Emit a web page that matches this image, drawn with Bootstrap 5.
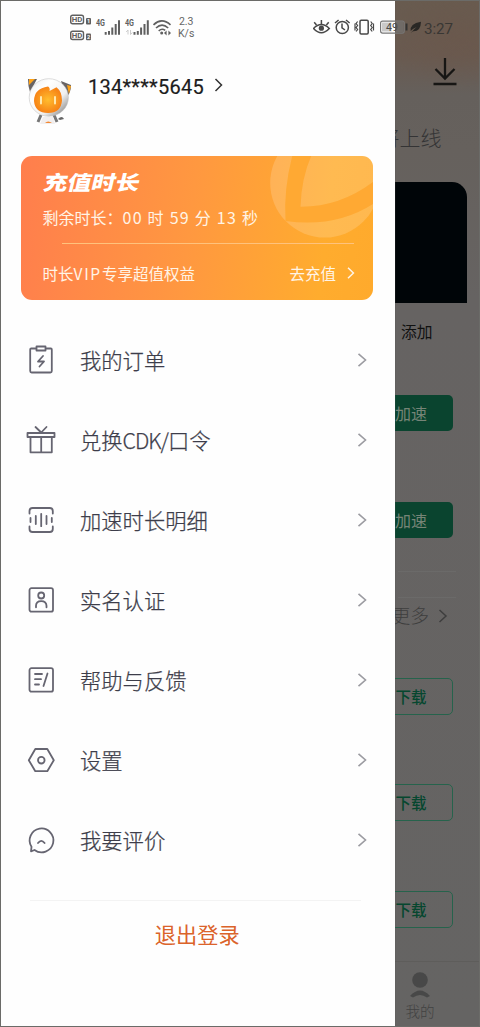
<!DOCTYPE html>
<html lang="zh-CN">
<head>
<meta charset="utf-8">
<meta name="viewport" content="width=device-width, initial-scale=1">
<title>我的</title>
<link href="https://cdn.jsdelivr.net/npm/bootstrap@5.3.0/dist/css/bootstrap.min.css" rel="stylesheet">
<style>
  body { font-family: "Noto Sans CJK SC", sans-serif; background: #fff; font-weight: 300; }
  .screen { width: 480px; height: 1027px; display: grid; grid-template-columns: 394.5px 1fr; }
  .screen::after { content: ""; position: absolute; inset: 0; border: 1px solid #6b6b68; pointer-events: none; z-index: 5; }
  svg { display: block; flex: none; }
  .statusbar { height: 54px; padding-left: 70px; z-index: 3; font: 400 10.5px/12px Roboto, sans-serif; color: #666; }
  .speed { margin-left: 6px; padding-top: 2px; }
  .clock { font-size: 15.2px; color: #393734; letter-spacing: -.1px; padding-top: 3px; margin: 0 27px 0 1px; }
  .drawer { background: #fefefe; box-shadow: 0 0 1px #555; z-index: 2; }
  .account { height: 102px; margin-top: 54px; padding: 22px 0 0 26px; }
  .phone { font: 400 20px/24px Roboto, sans-serif; color: #1c1c1c; letter-spacing: .25px; margin: -1px 0 0 15px; width: 117px; -webkit-text-stroke: .2px #1c1c1c; }
  .vip { margin-left: 21px; width: 352px; height: 144px; border-radius: 11px; background: linear-gradient(97deg, #ff7e4d 0%, #ff9840 48%, #ffac2e 85%, #ffaa2c 100%); color: #fff4e6; padding: 13px 18px 0 21.5px; font-weight: 400; }
  .swirl { right: 0; top: 0; }
  .vip-title { font-size: 20px; line-height: 26px; font-weight: 900; color: #fff; transform: translateX(-2px) scaleX(1.2) skewX(-11deg); transform-origin: 0 100%; width: 80px; white-space: nowrap; }
  .remain { font-size: 16px; line-height: 24px; margin-top: 10px; white-space: nowrap; }
  .remain span { letter-spacing: 1.25px; }
  .rule { height: 1px; background: #ffc27c; margin: 14px 1px 0 19px; }
  .vip-foot { font-size: 15.5px; line-height: 24px; margin-top: 17px; }
  .vip-word { letter-spacing: 1.7px; }
  .menu { margin-top: 20px; }
  .menu-row { height: 80px; padding: 0 28px 0 26px; font-size: 21.3px; color: #3d3d4a; text-decoration: none; }
  .menu-label { margin-left: 24px; -webkit-text-stroke: .25px #3d3d4a; }
  .menu-row .ico { stroke: #666571; stroke-width: 1.8; fill: none; stroke-linecap: round; stroke-linejoin: round; }
  .cdk { letter-spacing: -1px; }
  .arrow { fill: none; stroke: #9b9ba1; stroke-width: 1.6; }
  .leave { margin: 20px 34px 0 30px; padding-left: 4px; border-top: 1px solid #f3f3f3; color: #db632a; font-size: 21.2px; line-height: 66px; font-weight: 400; }
  .behind { background: radial-gradient(ellipse 70px 50px at 62px 38px, #6b564a80, #6b564a00), linear-gradient(180deg, #685b4f 0, #695a50 55px, #65605c 95px, #66615d 150px, #666362 300px, #656463 1027px); color: #333; }
  .strip { padding-right: 27.500px; }
  .soon { height: 60px; font-size: 21px; padding-right: 38.5px; color: #343435; margin-top: 20px; }
  .poster { height: 121px; width: 72px; border-radius: 0 15px 0 0; background: #000508; margin-top: 14px; }
  .add { height: 58px; font-size: 15.8px; font-weight: 400; color: #111; padding-right: 47.5px; }
  .act { width: 83px; height: 36px; font-size: 16px; line-height: 33px; padding: 0; border-radius: 5px; flex: none; }
  .boost, .boost:hover { background: #0a442f; color: #768477; border: 0; font-weight: 400; }
  .fetch { border: 1px solid #26634c; color: #06472f; font-weight: 500; font-size: 15.5px; height: 37px; }
  .boosts { margin-top: 34px; gap: 71px; }
  .more { margin: 33px 24px 0 3px; height: 60px; border-top: 1px solid #6b6a69; }
  .more-in { margin-top: 25px; border-top: 1px solid #6b6a69; height: 36px; font-size: 18.8px; padding-right: 8px; color: #3e3e3e; }
  .fetches { margin-top: 46.5px; gap: 69.5px; }
  .tab { margin-top: 33.5px; height: 66px; border-top: 1px solid #5e5d5b; padding: 9px 35px 0 0; font-size: 14.6px; line-height: 24px; color: #424242; }
  .tab-item { width: 50px; }
</style>
</head>
<body>
<div class="screen position-relative overflow-hidden">

  <header class="statusbar position-absolute top-0 start-0 w-100 d-flex align-items-center">
    <svg width="102" height="30" viewBox="70 13 102 30" fill="#5f5f5f" style="margin-top:2px">
      <g fill="none" stroke="#5f5f5f" stroke-width="1.4"><rect x="70.7" y="15.3" width="12.8" height="8.4" rx="2"/><rect x="70.7" y="31.3" width="12.8" height="8.2" rx="2"/></g>
      <g font-family="Roboto" font-weight="700" font-size="7.8"><text x="71.800" y="22.3">HD</text><text x="71.800" y="38.2">HD</text></g>
      <rect x="86" y="18" width="5" height="6.6" rx="1"/><rect x="86" y="33.6" width="5" height="6.6" rx="1"/>
      <g font-family="Roboto" font-weight="700" font-size="5.6" fill="#fff"><text x="87" y="23.4">1</text><text x="87" y="39">2</text></g>
      <g font-family="Roboto" font-weight="700" font-size="9"><text x="96" y="26.2" textLength="9" lengthAdjust="spacingAndGlyphs">4G</text><text x="125" y="26.2" textLength="9" lengthAdjust="spacingAndGlyphs">4G</text></g>
      <g stroke="#5f5f5f" stroke-width="2"><path d="M105.7 32v2.7M109 31v3.7M112.3 27.5v7.2M115.7 24v10.7M119 20.3v14.4"/><path d="M134.500 32v2.700M137.800 31v3.700M141.100 27.500v7.200M144.500 24v10.700M147.800 20.300v14.400"/></g>
      <path d="M128 34.500v-4.500l-1.800 2M130.500 30v4.500l1.800-2" fill="none" stroke="#ccc"/>
      <g fill="none" stroke="#5f5f5f" stroke-width="1.6"><path d="M153.500 24.800q8.200-7.800 17 0M156 28q6-5.600 12.200 0M158.700 31q3.200-3.200 6.500-.6"/></g>
      <circle cx="161.700" cy="33" r="1.500"/><path d="M164 33l2.600-2.400v4.800zM171 33l-2.600-2.400v4.800z"/>
    </svg>
    <div class="speed text-center">2.3<br>K/s</div>
    <svg class="ms-auto" width="110" height="20" viewBox="312 17.500 110 20" fill="none" stroke="#484848" stroke-width="1.5">
      <path d="M312.500 29q7.800-8 15.800 0q-8 8.500-15.800 0z"/><circle cx="320.400" cy="28.700" r="2.600" fill="#484848" stroke="none"/><path d="M320.400 24.500v-4M315.500 25.500l-2.300-2.800M325.400 25.500l2.300-2.800"/>
      <circle cx="341.300" cy="28" r="6.100"/><path d="M341 24v4.300l3 2.200M334 23.500l3.600-3M348.600 23.500l-3.600-3"/>
      <rect x="359" y="20.800" width="8.200" height="13.600" rx="1.200"/><path d="M356.600 22l-1.500 2 1.500 2-1.500 2 1.500 2-1.500 2M354 24v7M369.700 22l1.500 2-1.500 2 1.500 2-1.500 2 1.500 2M372.500 24v7" stroke-width="1.200"/>
      <rect x="381" y="23" width="9.500" height="9" fill="#c9c9c9" stroke="none"/><rect x="379.600" y="21.600" width="23.600" height="12" rx="2" stroke="#777" stroke-width="1.200"/><path d="M405.500 24v7" stroke-width="2" stroke="#333"/>
      <rect x="394.500" y="22.200" width="8" height="10.800" fill="#706b67" stroke="none"/>
      <text x="385" y="31.200" font-family="Roboto" font-size="10.500" fill="#4a4a4a" stroke="none">49</text>
      <path d="M409.700 33.500q4-4.500 6-6-4.600 2-6 4-1.200-7.500 10.300-9.300-.3 10-8 9.500z" fill="#292724" stroke="none"/>
    </svg>
    <div class="clock">3:27</div>
  </header>

  <aside class="drawer d-flex flex-column">
    <div class="account d-flex align-items-start">
      <svg width="47" height="50" viewBox="26 76 47 50">
        <defs><linearGradient id="helmet" x1="0" y1="0" x2="1" y2="1"><stop offset="0" stop-color="#e9e9e9"/><stop offset=".3" stop-color="#fff"/><stop offset=".65" stop-color="#f0f0f0"/><stop offset="1" stop-color="#6c6c6c"/></linearGradient>
        <radialGradient id="visor"><stop offset="0" stop-color="#ffbd2e"/><stop offset="1" stop-color="#f78316"/></radialGradient></defs>
        <path d="M28 79h9l-7 13q-2-6-2-13z" fill="#686363"/><path d="M29 79h6l-6 6z" fill="#ffa316"/>
        <path d="M61 81l10 4q0 8-5 13z" fill="#686363"/><path d="M67 85l4 1-2 8z" fill="#ffa316"/>
        <path d="M41 115l-3 7M54 115l3 7" stroke="#777" stroke-width="3"/><path d="M43 117h10l2 7H40z" fill="#f1eeee"/><path d="M45 123q3-3 7 0z" fill="#f48831"/>
        <ellipse cx="48.800" cy="97.500" rx="19.600" ry="18.800" fill="url(#helmet)" stroke="#bbb" stroke-width=".5"/>
        <path d="M48 86.500q-14 2-14 14.500 1 12 14 12t14-12.500q0-9-5.500-13.300L49.500 91q.800-3.500-1.500-4.500z" fill="url(#visor)"/>
        <path d="M41 97v6.500M55 97v6.500" stroke="#ffe8ad" stroke-width="2" stroke-linecap="round"/>
        <path d="M58 119q4-4 6 0l-4 1z" fill="#666"/>
      </svg>
      <div class="phone">134****5645</div>
      <svg style="margin:2px 0 0 9px" width="10" height="14" viewBox="0 0 10 14" fill="none" stroke="#333" stroke-width="1.500"><path d="M1.500 1l6 6-6 6"/></svg>
    </div>

    <section class="vip position-relative overflow-hidden">
      <svg class="swirl position-absolute" width="103" height="84" viewBox="270.500 156 103 84">
        <circle cx="325.300" cy="183" r="54.600" fill="#fff" fill-opacity=".17"/>
        <path d="M292.700 156Q284 190 286 221Q336 228 373.500 204V182Q340 207 301 206.700Q302 178 311.700 156Z" fill="#ffa933"/>
      </svg>
      <div class="position-relative">
        <div class="vip-title">充值时长</div>
        <div class="remain">剩余时长：<span>00 时 59 分 13 秒</span></div>
        <div class="rule"></div>
        <div class="vip-foot d-flex align-items-center">
          <span>时长<span class="vip-word">VIP</span>专享超值权益</span><span class="ms-auto">去充值</span>
          <svg style="margin-left:11px" width="8" height="12" viewBox="0 0 8 12" fill="none" stroke="#fff4e6" stroke-width="1.500"><path d="M1 .800l5.400 5.200L1 11.200"/></svg>
        </div>
      </div>
    </section>

    <nav class="menu d-flex flex-column">
      <a class="menu-row d-flex align-items-center"><svg class="ico" width="30" height="30" viewBox="0 0 30 30"><path d="M10 3.500H5.200q-1 0-1 1V26q0 1.500 1.500 1.500h18.600q1.500 0 1.500-1.500V4.500q0-1-1-1H20M10.500 1.500h9v4h-9zM17 11l-5 5.500h6L13.500 21.500"/></svg><span class="menu-label">我的订单</span><svg class="arrow ms-auto" width="10" height="14" viewBox="0 0 10 14"><path d="M1.500.800L8.500 7l-7 6.200"/></svg></a>
      <a class="menu-row d-flex align-items-center"><svg class="ico" width="30" height="30" viewBox="0 0 30 30"><path d="M1.500 8h27v4h-27zM4.500 12v15.300h21.300V12M15.200 12v15M9.500 2l5.700 5.500L20.500 2"/></svg><span class="menu-label">兑换<span class="cdk">CDK/</span>口令</span><svg class="arrow ms-auto" width="10" height="14" viewBox="0 0 10 14"><path d="M1.500.800L8.500 7l-7 6.200"/></svg></a>
      <a class="menu-row d-flex align-items-center"><svg class="ico" width="30" height="30" viewBox="0 0 30 30"><path d="M3.500 8.500V6q0-3 3-3h17.300q3 0 3 3v2.500M3.500 21.500V24q0 3 3 3h17.300q3 0 3-3v-2.500M4.500 13v4M9.800 11v8M15.200 8.800v12.400M20.500 11v8M25.800 13v4"/></svg><span class="menu-label">加速时长明细</span><svg class="arrow ms-auto" width="10" height="14" viewBox="0 0 10 14"><path d="M1.500.800L8.500 7l-7 6.200"/></svg></a>
      <a class="menu-row d-flex align-items-center"><svg class="ico" width="30" height="30" viewBox="0 0 30 30"><rect x="3.500" y="3.200" width="23.500" height="23.500" rx="2"/><circle cx="15.200" cy="10.500" r="3"/><path d="M10 22.300v-1.500q0-4.700 5.200-4.700t5.300 4.700v1.500"/></svg><span class="menu-label">实名认证</span><svg class="arrow ms-auto" width="10" height="14" viewBox="0 0 10 14"><path d="M1.500.800L8.500 7l-7 6.200"/></svg></a>
      <a class="menu-row d-flex align-items-center"><svg class="ico" width="30" height="30" viewBox="0 0 30 30"><rect x="3.500" y="3.200" width="23.500" height="23.500" rx="2"/><path d="M9 9h7M9 14.200h6M9 19.500h4M21.500 8.500L17.500 21"/></svg><span class="menu-label">帮助与反馈</span><svg class="arrow ms-auto" width="10" height="14" viewBox="0 0 10 14"><path d="M1.500.800L8.500 7l-7 6.200"/></svg></a>
      <a class="menu-row d-flex align-items-center"><svg class="ico" width="30" height="30" viewBox="0 0 30 30"><path d="M9.300 4h12l6.500 11.200-6.500 11h-12L2.800 15.200z"/><circle cx="15.300" cy="15.200" r="3.300"/></svg><span class="menu-label">设置</span><svg class="arrow ms-auto" width="10" height="14" viewBox="0 0 10 14"><path d="M1.500.800L8.500 7l-7 6.200"/></svg></a>
      <a class="menu-row d-flex align-items-center"><svg class="ico" width="30" height="30" viewBox="0 0 30 30"><path d="M5.500 21.800A11.900 11.900 0 1 1 8.500 25L5 26.300zM12 18q3.300-4.300 6.600 0"/></svg><span class="menu-label">我要评价</span><svg class="arrow ms-auto" width="10" height="14" viewBox="0 0 10 14"><path d="M1.500.800L8.500 7l-7 6.200"/></svg></a>
    </nav>
    <div class="leave text-center">退出登录</div>
  </aside>

  <main class="behind d-flex flex-column overflow-hidden text-nowrap">
    <svg class="align-self-end" style="margin:57px 23.5px 0 0" width="24" height="31" viewBox="0 0 24 31" fill="none" stroke="#171614" stroke-width="2.300"><path d="M12 1v20M2.500 12l9.500 9.500 9.500-9.500M.500 27h23"/></svg>
    <div class="soon d-flex align-items-center justify-content-end"><span>将上线</span></div>
    <div class="poster"></div>
    <div class="add d-flex align-items-center justify-content-end"><span>添加</span></div>
    <div class="boosts strip d-flex flex-column align-items-end">
      <button class="btn act boost">加速</button>
      <button class="btn act boost">加速</button>
    </div>
    <div class="more"><div class="more-in d-flex align-items-center justify-content-end"><span>更多</span><svg style="margin-left:9px" width="10" height="14" viewBox="0 0 10 14" fill="none" stroke="#3e3e3e" stroke-width="1.500"><path d="M1.500 1L8 7l-6.500 6"/></svg></div></div>
    <div class="fetches strip d-flex flex-column align-items-end">
      <button class="btn act fetch">下载</button>
      <button class="btn act fetch">下载</button>
      <button class="btn act fetch">下载</button>
    </div>
    <div class="tab d-flex justify-content-end">
      <div class="tab-item d-flex flex-column align-items-center"><svg width="24" height="28" viewBox="0 0 24 28" fill="#484848"><circle cx="12" cy="9" r="7.800"/><path d="M2 25q10-11 20 0l-3 1.500q-7-5-14 0z"/></svg><span>我的</span></div>
    </div>
  </main>
</div>
<script src="https://cdn.jsdelivr.net/npm/bootstrap@5.3.0/dist/js/bootstrap.bundle.min.js"></script>
</body>
</html>
